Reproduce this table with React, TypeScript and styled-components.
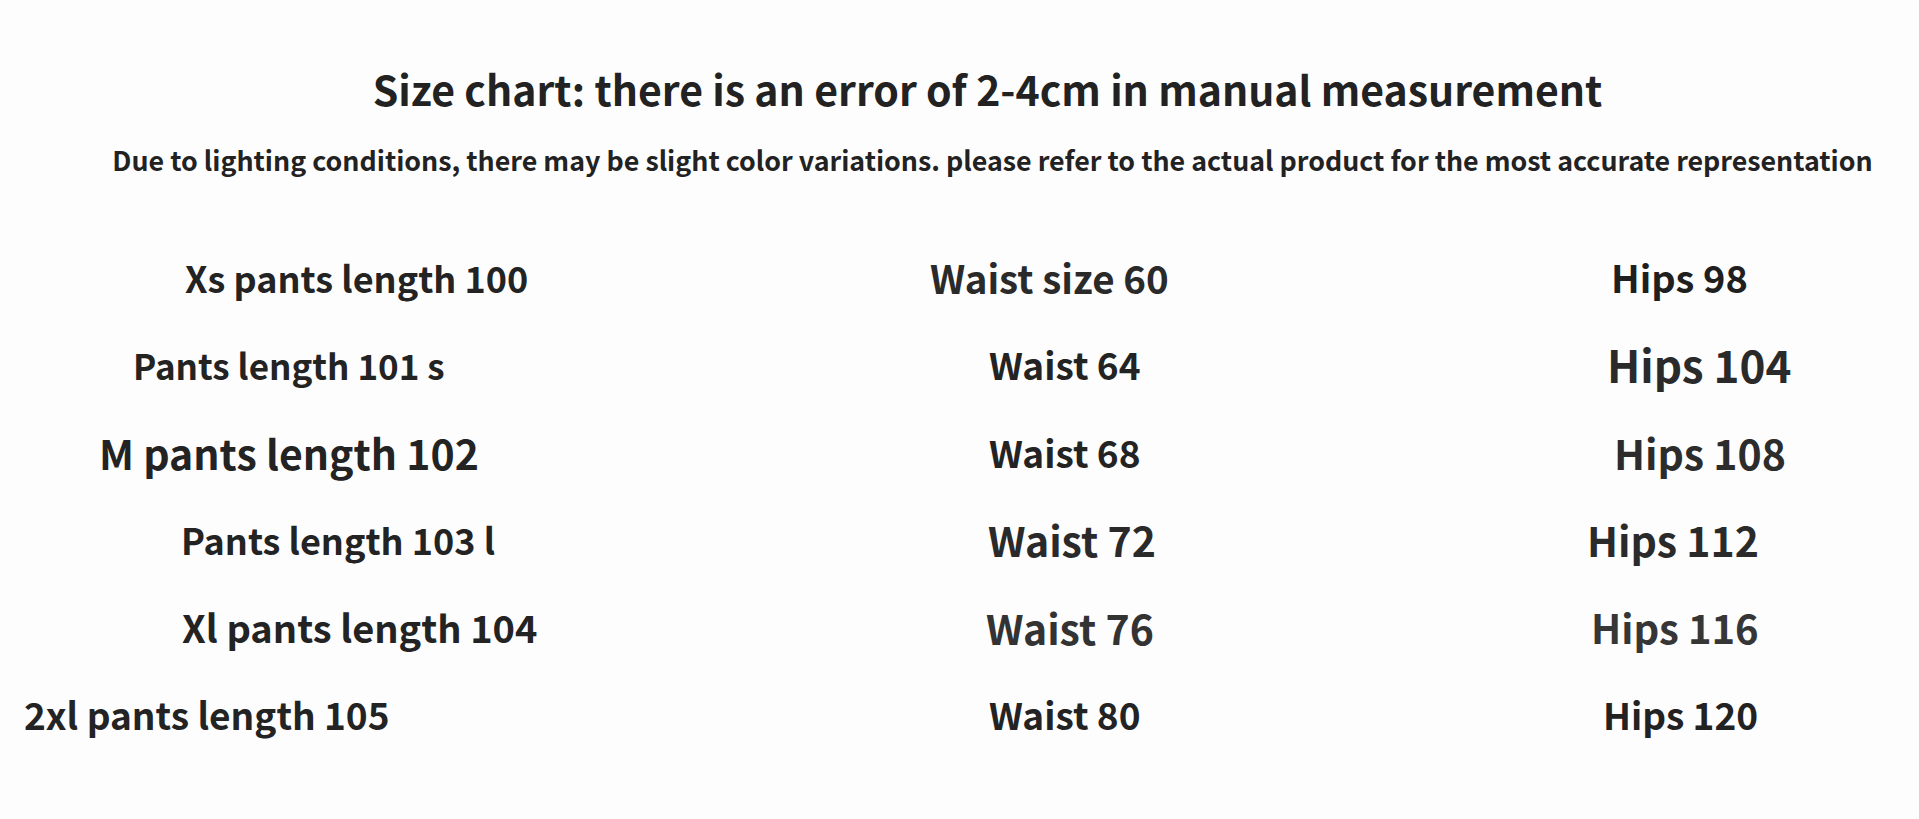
import React from "react";
import styled, { createGlobalStyle } from "styled-components";

const GlobalStyle = createGlobalStyle`
  html, body {
    margin: 0;
    padding: 0;
    background: #fdfdfd;
  }
  body {
    font-family: "Noto Sans CJK SC", "Noto Sans", sans-serif;
    color: #232323;
  }
`;

const Page = styled.main`
  width: 1919px;
  height: 819px;
  overflow: hidden;
  background: #fdfdfd;
`;

const Header = styled.header`
  display: flex;
  flex-direction: column;
  align-items: center;
  padding: 61px 0 0 56px;
`;

const Title = styled.h1`
  margin: 0;
  font-size: 41px;
  font-weight: 700;
  line-height: 54px;
  color: #222;
`;

const Subtitle = styled.p`
  margin: 28px 0 0 10px;
  font-size: 26.8px;
  font-weight: 700;
  line-height: 34px;
  color: #222;
`;

const Chart = styled.section`
  display: grid;
  grid-template-columns: 880px 620px 1fr;
  grid-auto-rows: 87.5px;
  margin-top: 56px;
`;

const Cell = styled.div<{ $indent: number; $size: number; $tone?: string }>`
  display: flex;
  align-items: center;
  padding-left: ${p => p.$indent}px;
  font-size: ${p => p.$size}px;
  font-weight: 700;
  color: ${p => p.$tone || "#232323"};
  white-space: nowrap;
`;

type Entry = { text: string; indent: number; size: number; tone?: string };

const rows: Entry[][] = [
  [
    { text: "Xs pants length 100", indent: 185, size: 36 },
    { text: "Waist size 60", indent: 50, size: 38.5, tone: "#2a2a2a" },
    { text: "Hips 98", indent: 111, size: 38, tone: "#1f1f1f" },
  ],
  [
    { text: "Pants length 101 s", indent: 133, size: 35 },
    { text: "Waist 64", indent: 109, size: 37 },
    { text: "Hips 104", indent: 107, size: 44, tone: "#2a2a2a" },
  ],
  [
    { text: "M pants length 102", indent: 99, size: 41 },
    { text: "Waist 68", indent: 109, size: 37 },
    { text: "Hips 108", indent: 114, size: 41, tone: "#2c2c2c" },
  ],
  [
    { text: "Pants length 103 l", indent: 181, size: 36 },
    { text: "Waist 72", indent: 108, size: 41, tone: "#2a2a2a" },
    { text: "Hips 112", indent: 87, size: 41, tone: "#2a2a2a" },
  ],
  [
    { text: "Xl pants length 104", indent: 182, size: 38 },
    { text: "Waist 76", indent: 106, size: 41, tone: "#333" },
    { text: "Hips 116", indent: 91, size: 40, tone: "#363636" },
  ],
  [
    { text: "2xl pants length 105", indent: 24, size: 37 },
    { text: "Waist 80", indent: 109, size: 37 },
    { text: "Hips 120", indent: 103, size: 37, tone: "#222" },
  ],
];

const App: React.FC = () => {
  return (
    <Page>
      <GlobalStyle />
      <Header>
        <Title>Size chart: there is an error of 2-4cm in manual measurement</Title>
        <Subtitle>
          Due to lighting conditions, there may be slight color variations. please refer to the actual product for the most accurate representation
        </Subtitle>
      </Header>
      <Chart>
        {rows.map((row, i) =>
          row.map((cell, j) => (
            <Cell key={`${i}-${j}`} $indent={cell.indent} $size={cell.size} $tone={cell.tone}>
              {cell.text}
            </Cell>
          ))
        )}
      </Chart>
    </Page>
  );
};

export default App;
